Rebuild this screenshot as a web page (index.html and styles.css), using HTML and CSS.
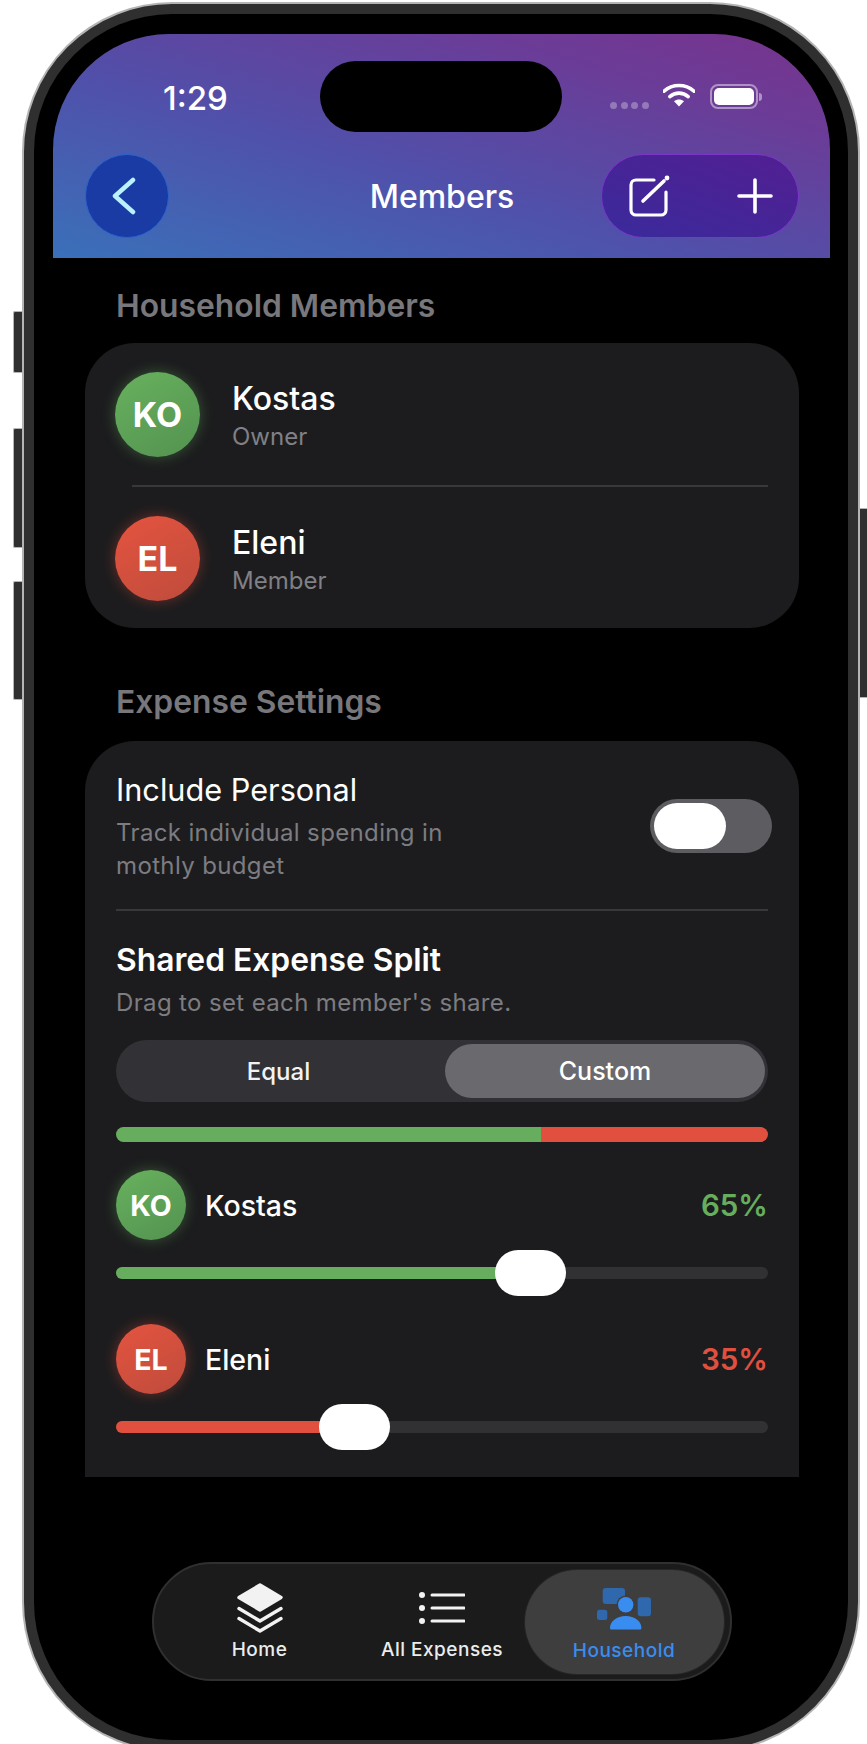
FILE: index.html
```html
<!DOCTYPE html>
<html lang="en">
<head>
<meta charset="utf-8">
<title>Members</title>
<link rel="stylesheet" href="styles.css">
</head>
<body>
<div class="phone">
  <span class="side side-mute"></span>
  <span class="side side-up"></span>
  <span class="side side-down"></span>
  <span class="side side-power"></span>
  <div class="bezel">
    <div class="screen">
      <header class="header">
        <div class="status">
          <div class="time">1:29</div>
          <div class="island"></div>
          <div class="status-icons">
            <div class="dots"><i></i><i></i><i></i><i></i></div>
            <svg class="wifi" viewBox="0 0 32 24"><path d="M1 8.2C9.500 .6 22.500 .6 31 8.200" fill="none" stroke="#fff" stroke-width="3.600" stroke-linecap="round"/><path d="M6.800 13.600C12.200 9 19.800 9 25.200 13.600" fill="none" stroke="#fff" stroke-width="3.600" stroke-linecap="round"/><path d="M11 18.200l5 5.300 5-5.300c-3-2.400-7-2.400-10 0z" fill="#fff"/></svg>
            <div class="battery"><div class="battery-body"><div class="battery-fill"></div></div><div class="battery-cap"></div></div>
          </div>
        </div>
        <nav class="nav">
          <button class="back"><svg viewBox="0 0 24 38" class="chev"><path d="M21 3L3 19l18 16" fill="none" stroke="#b9f1ff" stroke-width="4.500" stroke-linecap="round" stroke-linejoin="round"/></svg></button>
          <h1 class="title">Members</h1>
          <div class="pill">
            <svg class="compose" viewBox="0 0 42 42"><path d="M26 5H8a5 5 0 0 0-5 5v25a5 5 0 0 0 5 5h25a5 5 0 0 0 5-5V17" fill="none" stroke="#fff" stroke-width="3.200" stroke-linecap="round"/><path d="M15 26L36 6" fill="none" stroke="#fff" stroke-width="3.600" stroke-linecap="round"/><circle cx="39" cy="3" r="2.400" fill="#fff"/></svg>
            <svg class="plus" viewBox="0 0 36 36"><path d="M18 2v32M2 18h32" fill="none" stroke="#fff" stroke-width="3.600" stroke-linecap="round"/></svg>
          </div>
        </nav>
      </header>
      <main class="content">
        <h2 class="section first">Household Members</h2>
        <section class="card members">
          <div class="member">
            <div class="avatar green">KO</div>
            <div class="member-text"><div class="name">Kostas</div><div class="role">Owner</div></div>
          </div>
          <div class="rule inset"></div>
          <div class="member">
            <div class="avatar red">EL</div>
            <div class="member-text"><div class="name">Eleni</div><div class="role">Member</div></div>
          </div>
        </section>
        <h2 class="section second">Expense Settings</h2>
        <section class="card settings">
          <div class="setting">
            <div>
              <div class="setting-name">Include Personal</div>
              <div class="hint wrap">Track individual spending in mothly budget</div>
            </div>
            <div class="toggle"><div class="toggle-thumb"></div></div>
          </div>
          <div class="rule settings-rule"></div>
          <div class="split-title">Shared Expense Split</div>
          <div class="hint">Drag to set each member's share.</div>
          <div class="segment">
            <div class="seg">Equal</div>
            <div class="seg active">Custom</div>
          </div>
          <div class="bar"><div class="bar-green" style="width:65.2%"></div><div class="bar-red"></div></div>
          <div class="share first-share">
            <div class="avatar small green">KO</div>
            <div class="share-name">Kostas</div>
            <div class="pct pct-green">65%</div>
          </div>
          <div class="track"><div class="fill fill-green" style="width:60%"></div><div class="thumb" style="left:379px"></div></div>
          <div class="share second-share">
            <div class="avatar small red">EL</div>
            <div class="share-name">Eleni</div>
            <div class="pct pct-red">35%</div>
          </div>
          <div class="track"><div class="fill fill-red" style="width:35%"></div><div class="thumb" style="left:203px"></div></div>
        </section>
      </main>
      <div class="tabbar">
        <div class="tab tab-home">
          <svg class="tab-icon home-icon" viewBox="0 0 46 50"><path d="M23 2L44 14.500 23 27 2 14.500z" fill="#f2f2f2" stroke="#f2f2f2" stroke-width="3.400" stroke-linejoin="round"/><path d="M2 25.500L23 38l21-12.500" fill="none" stroke="#f2f2f2" stroke-width="3.400" stroke-linejoin="round" stroke-linecap="round"/><path d="M2 35.500L23 48l21-12.500" fill="none" stroke="#f2f2f2" stroke-width="3.400" stroke-linejoin="round" stroke-linecap="round"/></svg>
          <div class="tab-label">Home</div>
        </div>
        <div class="tab tab-all">
          <svg class="tab-icon list-icon" viewBox="0 0 46 34"><g fill="#f2f2f2"><circle cx="3" cy="4" r="3"/><circle cx="3" cy="17" r="3"/><circle cx="3" cy="30" r="3"/></g><path d="M13 4h32M13 17h32M13 30h32" stroke="#f2f2f2" stroke-width="3" stroke-linecap="round" fill="none"/></svg>
          <div class="tab-label">All Expenses</div>
        </div>
        <div class="tab tab-active">
          <svg class="tab-icon house-icon" viewBox="0 0 54 42"><rect x="5.700" y="0" width="22.300" height="16" rx="3" fill="#2f68ad"/><rect x="40.700" y="9.300" width="13.300" height="19" rx="3" fill="#2f68ad"/><rect x="0" y="21.700" width="10.300" height="10.300" rx="2.500" fill="#2f68ad"/><circle cx="28.700" cy="16.700" r="9.200" fill="#3e3e3e"/><circle cx="28.700" cy="16.700" r="7.700" fill="#3a8df0"/><path d="M13 40c0-7 7-12 15.700-12s15.700 5 15.700 12c0 1-.7 1.500-1.500 1.500H14.500c-.8 0-1.500-.5-1.500-1.500z" fill="#3a8df0"/></svg>
          <div class="tab-label active-label">Household</div>
        </div>
      </div>
    </div>
  </div>
</div>
</body>
</html>
```

FILE: styles.css
```css
* { box-sizing: border-box; }
html, body { margin: 0; padding: 0; height: 1744px; overflow: hidden; background: #fff; }
body { font-family: Inter, "Liberation Sans", sans-serif; color: #fff; }

.phone {
  position: relative;
  width: 838px;
  height: 1750px;
  margin: 2px 0 0 22px;
  padding: 10px;
  background: #2f2f2f;
  border: 2px solid #b4b4b4;
  border-radius: 150px;
}
.side { position: absolute; width: 9px; background: #2f2f2f; border: 1px solid #b4b4b4; }
.side-mute { left: -11px; top: 307px; height: 62px; border-right: 0; border-radius: 2px 0 0 2px; }
.side-up { left: -11px; top: 424px; height: 120px; border-right: 0; border-radius: 2px 0 0 2px; }
.side-down { left: -11px; top: 577px; height: 119px; border-right: 0; border-radius: 2px 0 0 2px; }
.side-power { right: -11px; top: 504px; height: 190px; border-left: 0; border-radius: 0 2px 2px 0; }

.bezel { background: #000; border-radius: 138px; height: 100%; padding: 20px 19px 0; }
.screen { width: 777px; }

.header {
  height: 224px;
  border-radius: 116px 116px 0 0;
  background: linear-gradient(16deg, #3a70b9 0%, #5050aa 42%, #6b3c97 78%, #78338c 100%);
  padding: 27px 31px 0 32px;
}
.status { display: flex; align-items: center; height: 71px; }
.time { width: 155px; text-align: center; margin-left: 33px; margin-right: 47px; font-size: 33px; font-weight: 500; position: relative; top: 1px; }
.island { width: 242px; height: 71px; border-radius: 36px; background: #000; }
.status-icons { display: flex; align-items: center; margin-left: 48px; height: 30px; }
.dots { display: flex; gap: 3.500px; margin-top: 18px; }
.dots i { display: block; width: 7px; height: 7px; border-radius: 50%; background: rgba(255,255,255,.3); }
.wifi { width: 32px; height: 24px; margin-left: 14px; margin-top: -3px; }
.battery { display: flex; align-items: center; margin-left: 15px; }
.battery-body { width: 48px; height: 25px; border: 2px solid rgba(255,255,255,.45); border-radius: 8px; padding: 2px; }
.battery-fill { width: 100%; height: 100%; background: #fff; border-radius: 5px; }
.battery-cap { width: 3px; height: 8px; margin-left: 1px; background: rgba(255,255,255,.45); border-radius: 0 3px 3px 0; }

.nav { display: grid; grid-template-columns: 1fr auto 1fr; align-items: center; height: 84px; margin-top: 22px; }
.back { width: 84px; height: 84px; padding: 0; border-radius: 50%; background: #1a3aa4; border: 1.500px solid #2a62cf; display: flex; align-items: center; justify-content: center; }
.chev { width: 24px; height: 38px; margin-right: 6px; }
.title { margin: 2px 0 0; font-size: 32px; font-weight: 500; line-height: 36px; }
.pill { justify-self: end; width: 198px; height: 84px; border-radius: 42px; background: linear-gradient(20deg, #3a2a9c 0%, #521f92 100%); border: 1.500px solid #7c35c9; display: flex; align-items: center; padding: 0 25px 0 26px; justify-content: space-between; }
.compose { width: 42px; height: 42px; }
.plus { width: 36px; height: 36px; }

.content { padding: 0 31px 0 32px; }
.section { margin: 0; font-size: 31.800px; font-weight: 600; line-height: 34px; color: #77777c; padding-left: 31px; }
.first { padding-top: 31px; }
.second { margin-top: 57px; }
.card { background: #1c1c1e; border-radius: 50px; }
.members { margin-top: 20px; height: 285px; padding: 29px 31px 27px 30px; }
.member { display: flex; align-items: center; gap: 32px; height: 85px; }
.member-text { padding-top: 3px; }
.avatar { flex: none; width: 85px; height: 85px; border-radius: 50%; display: flex; align-items: center; justify-content: center; font-size: 34px; font-weight: 700; }
.avatar.small { width: 70px; height: 70px; font-size: 28.500px; }
.green { background: linear-gradient(150deg, #68b15e, #539250); box-shadow: 0 0 14px rgba(102,174,93,.4); }
.red { background: linear-gradient(150deg, #e4543f, #bf4b3c); box-shadow: 0 0 14px rgba(225,80,63,.4); }
.name { font-size: 32px; font-weight: 500; line-height: 36px; }
.role { font-size: 24px; line-height: 30px; color: #808085; margin-top: 5px; }
.rule { height: 2px; background: #38383a; }
.inset { margin: 28px 0 29px 17px; }

.settings { margin-top: 22px; border-radius: 50px 50px 0 0; height: 736px; padding: 31px 31px 0 31px; }
.setting { display: flex; justify-content: space-between; align-items: flex-start; }
.setting-name { font-size: 30.700px; font-weight: 400; line-height: 36px; }
.hint { font-size: 24px; line-height: 33px; color: #7c7c81; margin-top: 8px; letter-spacing: .36px; }
.wrap { max-width: 350px; }
.toggle { width: 122px; height: 54px; margin: 27px -4px 0 0; padding: 4px; border-radius: 27px; background: #5c5c61; }
.toggle-thumb { width: 72px; height: 46px; border-radius: 23px; background: #fff; }
.settings-rule { margin-top: 27px; }
.split-title { margin-top: 31px; font-size: 31.800px; font-weight: 600; line-height: 36px; }
.segment { display: flex; height: 62px; margin-top: 21px; padding: 4px 3px 4px 0; border-radius: 31px; background: #323236; }
.seg { flex: 1; display: flex; align-items: center; justify-content: center; padding-right: 4px; font-size: 24px; font-weight: 500; border-radius: 27px; color: #f2f2f2; }
.seg.active { background: #69696e; color: #fff; flex: none; width: 320px; padding-right: 0; font-size: 25px; }
.bar { display: flex; height: 15px; margin-top: 25px; border-radius: 8px; overflow: hidden; }
.bar-green { background: #66ae5d; }
.bar-red { flex: 1; background: #e1503f; }
.share { display: flex; align-items: center; height: 70px; }
.first-share { margin-top: 28px; }
.second-share { margin-top: 45px; }
.share-name { margin-left: 19px; font-size: 28.500px; font-weight: 500; flex: 1; }
.pct { font-size: 29.500px; font-weight: 600; }
.pct-green { color: #66ae5d; }
.pct-red { color: #e1503f; }
.track { position: relative; height: 12px; margin-top: 27px; background: #313133; border-radius: 6px; }
.fill { height: 100%; border-radius: 6px; }
.fill-green { background: #66ae5d; }
.fill-red { background: #e1503f; }
.thumb { position: absolute; top: -17px; width: 71px; height: 46px; border-radius: 23px; background: #fff; }

.tabbar { display: flex; align-items: center; width: 580px; height: 119px; margin: 85px auto 0; padding: 6px 6px 5px 0; background: #1b1b1b; border: 2px solid #303030; border-radius: 60px; }
.tab { display: flex; flex-direction: column; align-items: center; justify-content: flex-end; }
.tab-icon { display: block; }
.tab-home { width: 212px; height: 100%; padding-bottom: 12px; }
.tab-all { width: 153px; height: 100%; padding-bottom: 12px; }
.tab-active { width: 199px; height: 104px; margin-left: auto; border-radius: 52px; background: #3e3e3e; box-shadow: 0 0 0 1px #262626; padding-bottom: 11px; }
.home-icon { width: 46px; height: 50px; margin-bottom: 5px; }
.list-icon { width: 46px; height: 34px; margin-bottom: 13px; }
.house-icon { width: 54px; height: 42px; margin-bottom: 9px; }
.tab-label { font-size: 19px; font-weight: 500; line-height: 24px; letter-spacing: .5px; color: #ececec; white-space: nowrap; }
.active-label { color: #3a8df0; }
```
